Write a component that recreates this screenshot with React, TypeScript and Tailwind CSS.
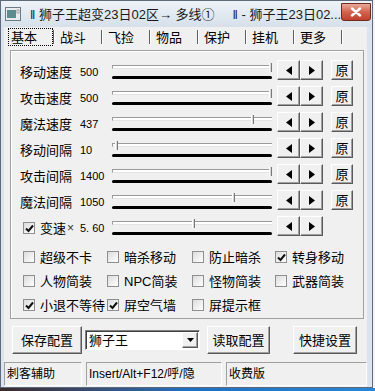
import React from 'react';

type SliderRow = {
  label: string;
  value: string;
  pos: number;
  check?: boolean;
  reset?: boolean;
};

const sliderRows: SliderRow[] = [
  { label: '移动速度', value: '500', pos: 1, reset: true },
  { label: '攻击速度', value: '500', pos: 1, reset: true },
  { label: '魔法速度', value: '437', pos: 0.87, reset: true },
  { label: '移动间隔', value: '10', pos: 0.02, reset: true },
  { label: '攻击间隔', value: '1400', pos: 1, reset: true },
  { label: '魔法间隔', value: '1050', pos: 0.75, reset: true },
  { label: '变速', value: '5. 60', pos: 0.5, check: true },
];

const checkRows: { label: string; on: boolean }[][] = [
  [
    { label: '超级不卡', on: false },
    { label: '暗杀移动', on: false },
    { label: '防止暗杀', on: false },
    { label: '转身移动', on: true },
  ],
  [
    { label: '人物简装', on: false },
    { label: 'NPC简装', on: false },
    { label: '怪物简装', on: false },
    { label: '武器简装', on: false },
  ],
  [
    { label: '小退不等待', on: true },
    { label: '屏空气墙', on: true },
    { label: '屏提示框', on: false },
  ],
];

const tabs = ['基本', '战斗', '飞捡', '物品', '保护', '挂机', '更多'];

const btn3d =
  'border border-t-white border-l-white border-r-[#5a5a5a] border-b-[#5a5a5a] bg-[#f0f0f0] shadow-[inset_-1px_-1px_0_#a0a0a0]';

function CheckBox({ on }: { on: boolean }) {
  return (
    <span className="flex h-[12px] w-[12px] shrink-0 items-center justify-center border border-[#8e8f8f] bg-gradient-to-br from-[#dcdcdc] to-white">
      {on && (
        <svg width="9" height="9" viewBox="0 0 9 9">
          <path d="M1 4.5 L3.5 7 L8 1.5" fill="none" stroke="#111" strokeWidth="2" />
        </svg>
      )}
    </span>
  );
}

function Slider({ pos }: { pos: number }) {
  return (
    <div className="relative h-[16px] w-[160px]">
      <div className="absolute left-0 right-0 top-[1px] h-[4px] border-l border-t border-[#9a9a9a] border-b border-b-[#e4e4e4] bg-white" />
      <div className="absolute bottom-[1px] left-0 right-0 h-[3px] rounded-full bg-black" />
      <div
        className="absolute top-[-1px] h-[9px] w-[3px] border-l border-white border-r border-r-[#7a7a7a] bg-[#d6d6d6]"
        style={{ left: `${Math.min(pos * 160, 157)}px` }}
      />
    </div>
  );
}

function Arrow({ dir }: { dir: 'l' | 'r' }) {
  return (
    <svg width="6" height="9" viewBox="0 0 6 9">
      <polygon points={dir === 'l' ? '6,0 6,9 0,4.5' : '0,0 0,9 6,4.5'} fill="#000" />
    </svg>
  );
}

export default function App() {
  return (
    <div className="h-[391px] w-[375px] overflow-hidden bg-[#f4f4f4] font-['Liberation_Sans','Noto_Sans_CJK_SC',sans-serif] text-[13px] leading-none text-black">
      <div className="flex h-[388px] w-[373px] flex-col border border-[#5d6b7c] bg-[#dce5ef]">
        {/* title bar */}
        <div className="flex h-[26px] items-center whitespace-nowrap bg-gradient-to-b from-[#eef3f8] to-[#d6e0ea]">
          <svg width="16" height="14" viewBox="0 0 16 14" className="ml-[4px] shrink-0">
            <rect x="0.5" y="0.5" width="15" height="13" fill="#e8ecef" stroke="#6c7b88" />
            <rect x="2" y="3" width="9" height="8" fill="#5c8c8c" />
            <rect x="12" y="3" width="2" height="3" fill="#fff" stroke="#5a5a5a" strokeWidth="0.5" />
          </svg>
          <span className="ml-[9px] shrink-0 text-[13px] text-[#1a1a1a]">‖ 狮子王超变23日02区→ 多线①</span>
          <span className="ml-[18px] shrink-0 text-[13px] text-[#1a1a1a]">‖ - 狮子王23日02...</span>
          <div className="ml-auto mr-[2px] mt-[-4px] flex h-[18px] w-[30px] shrink-0 items-center justify-center rounded-b-[3px] border border-[#6e2b20] bg-gradient-to-b from-[#e9a99a] via-[#d2634f] to-[#c0412c]">
            <svg width="12" height="10" viewBox="0 0 12 10">
              <path d="M2 1.5 L10 8.5 M10 1.5 L2 8.5" stroke="#fff" strokeWidth="2.4" strokeLinecap="round" />
            </svg>
          </div>
        </div>

        {/* client area */}
        <div className="ml-[3px] mr-[5px] flex flex-1 flex-col bg-[#f0f0f0]">
          {/* tabs */}
          <div className="ml-[4px] mt-[1px] flex h-[18px] items-stretch">
            {tabs.map((t, i) => (
              <div key={t} className="flex items-stretch">
                {i > 0 && <span className="my-[2px] w-[2px] border-l border-[#5f5f5f] border-r border-r-white" />}
                <span
                  className={
                    i === 0
                      ? 'flex w-[45px] items-center border border-dotted border-black pl-[2px]'
                      : 'flex w-[46px] items-center pl-[5px]'
                  }
                >
                  {t}
                </span>
              </div>
            ))}
            <span className="my-[2px] w-[2px] border-l border-[#5f5f5f] border-r border-r-white" />
          </div>

          {/* panel */}
          <div className="ml-[6px] mr-[3px] mt-[4px] flex h-[269px] flex-col border border-[#a0a0a0] pt-[8px] shadow-[inset_1px_1px_0_white]">
            {sliderRows.map((r) => (
              <div key={r.label} className="flex h-[26px] items-center pl-[9px]">
                <div className="flex w-[60px] items-center">
                  {r.check ? (
                    <>
                      <span className="ml-[3px]">
                        <CheckBox on />
                      </span>
                      <span className="ml-[5px]">{r.label}</span>
                      <span className="ml-[1px] text-[12px] text-[#333]">×</span>
                    </>
                  ) : (
                    r.label
                  )}
                </div>
                <span className="w-[32px] text-[11px]">{r.value}</span>
                <Slider pos={r.pos} />
                <div className="mb-[4px] ml-[5px] flex">
                  <span className={`flex h-[20px] w-[23px] items-center justify-center ${btn3d}`}>
                    <Arrow dir="l" />
                  </span>
                  <span className={`flex h-[20px] w-[23px] items-center justify-center ${btn3d}`}>
                    <Arrow dir="r" />
                  </span>
                  {r.reset && (
                    <span className={`ml-[8px] flex h-[20px] w-[22px] items-center justify-center ${btn3d}`}>原</span>
                  )}
                </div>
              </div>
            ))}
            <div className="mt-[4px] flex flex-col">
              {checkRows.map((row, i) => (
                <div key={i} className="grid h-[24px] grid-cols-[84px_85px_83px_1fr] items-center pl-[12px]">
                  {row.map((c) => (
                    <div key={c.label} className="flex items-center">
                      <CheckBox on={c.on} />
                      <span className="ml-[5px]">{c.label}</span>
                    </div>
                  ))}
                </div>
              ))}
            </div>
          </div>

          {/* bottom buttons */}
          <div className="mt-[7px] flex h-[28px] items-center">
            <span className={`ml-[8px] flex h-[28px] w-[70px] items-center justify-center ${btn3d}`}>保存配置</span>
            <div className="ml-[3px] flex h-[20px] w-[115px] items-center border border-t-[#808080] border-l-[#808080] border-r-white border-b-white bg-white shadow-[inset_1px_1px_0_#404040]">
              <span className="ml-[3px] flex-1">狮子王</span>
              <span className={`mr-[1px] flex h-[16px] w-[16px] items-center justify-center ${btn3d}`}>
                <svg width="7" height="4" viewBox="0 0 7 4">
                  <polygon points="0,0 7,0 3.5,4" fill="#000" />
                </svg>
              </span>
            </div>
            <span className={`ml-[7px] flex h-[28px] w-[63px] items-center justify-center ${btn3d}`}>读取配置</span>
            <span className={`ml-[23px] flex h-[28px] w-[64px] items-center justify-center ${btn3d}`}>快捷设置</span>
          </div>

          {/* status bar */}
          <div className="mt-[6px] flex h-[27px] items-stretch gap-[4px] pb-[1px] pt-[2px] text-[12px]">
            <span className="flex w-[78px] items-center border border-t-[#a0a0a0] border-l-[#a0a0a0] border-r-white border-b-white pl-[2px]">
              刺客辅助
            </span>
            <span className="flex w-[136px] items-center border border-t-[#a0a0a0] border-l-[#a0a0a0] border-r-white border-b-white pl-[2px]">
              Insert/Alt+F12/呼/隐
            </span>
            <span className="flex flex-1 items-center border border-t-[#a0a0a0] border-l-[#a0a0a0] border-r-white border-b-white pl-[2px]">
              收费版
            </span>
          </div>
        </div>
      </div>
      <div className="h-[3px] w-full bg-gradient-to-r from-[#3a2a2a] via-[#1d70c0] to-[#2a86d4]" />
    </div>
  );
}
